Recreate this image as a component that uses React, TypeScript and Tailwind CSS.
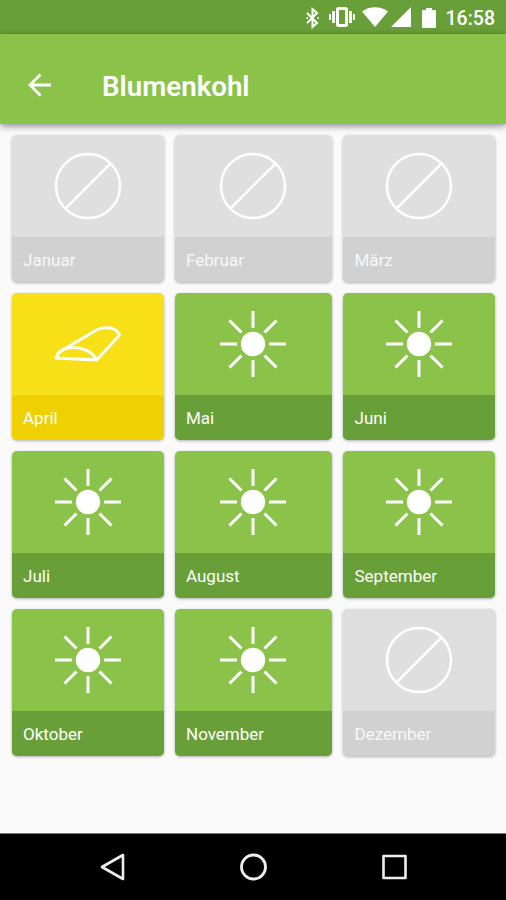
import React from 'react';

type Status = 'none' | 'indoor' | 'harvest';

interface Month {
  name: string;
  status: Status;
}

const months: Month[] = [
  { name: 'Januar', status: 'none' },
  { name: 'Februar', status: 'none' },
  { name: 'März', status: 'none' },
  { name: 'April', status: 'indoor' },
  { name: 'Mai', status: 'harvest' },
  { name: 'Juni', status: 'harvest' },
  { name: 'Juli', status: 'harvest' },
  { name: 'August', status: 'harvest' },
  { name: 'September', status: 'harvest' },
  { name: 'Oktober', status: 'harvest' },
  { name: 'November', status: 'harvest' },
  { name: 'Dezember', status: 'none' },
];

const cardColors: Record<Status, string> = {
  none: 'bg-[#dfdfdf]',
  indoor: 'bg-[#f7e017]',
  harvest: 'bg-[#8bc34a]',
};

const labelColors: Record<Status, string> = {
  none: 'bg-[#d1d1d1] text-[#f8f8f8]',
  indoor: 'bg-[#efd003] text-white',
  harvest: 'bg-[#689f38] text-white',
};

const NoneIcon = () => (
  <svg width="68" height="68" viewBox="-34 -34 68 68" fill="none" stroke="white" strokeWidth="2.5">
    <circle r="32" />
    <path d="M-22 22L22 -22" />
  </svg>
);

const TunnelIcon = () => (
  <svg width="68" height="68" viewBox="-34 -34 68 68" fill="none" stroke="white" strokeWidth="2.8" strokeLinejoin="round">
    <path d="M8.7 16L-32 14C-30 8 -26 5 -20 4C-7 2 4 7 8.7 16Z" />
    <path d="M-31 10.5C-30 8.5 -26 6.5 -22 4L6 -12.5C16 -18.5 27 -17.5 31.5 -9.5C31 -8 29 -6 27 -4L8.7 16" />
  </svg>
);

const SunIcon = () => (
  <svg width="68" height="68" viewBox="-34 -34 68 68" fill="none" stroke="white" strokeWidth="3">
    <circle r="12.2" fill="white" stroke="none" />
    <path d="M0 -33V-16M0 16V33M-33 0H-16M16 0H33" />
    <path d="M-23.5 -23.5L-11.5 -11.5M11.5 11.5L23.5 23.5M23.5 -23.5L11.5 -11.5M-11.5 11.5L-23.5 23.5" />
  </svg>
);

const icons: Record<Status, React.FC> = {
  none: NoneIcon,
  indoor: TunnelIcon,
  harvest: SunIcon,
};

const StatusBar = () => (
  <div className="h-[34px] bg-[#689f38] flex items-center justify-end pr-[11px] text-white">
    <svg className="mr-[9px] mt-px" width="15" height="22" viewBox="0 0 15 22" fill="none" stroke="white" strokeWidth="2">
      <path d="M2 6L12 16L7.5 20V2L12 6L2 16" />
      <path d="M1.5 11H3M12.5 11H14" />
    </svg>
    <svg className="mr-[7px]" width="26" height="20" viewBox="0 0 26 20" fill="none" stroke="white" strokeWidth="2">
      <rect x="8.5" y="1.5" width="9" height="17" rx="1" strokeWidth="3" />
      <path d="M4.5 4V16M21.5 4V16" strokeWidth="2.8" />
      <path d="M1 7V13M25 7V13" />
    </svg>
    <svg className="mr-[3px]" width="26" height="20" viewBox="0 0 26 20" fill="white">
      <path d="M0 4.5C7 -1.3 19 -1.3 26 4.5L13 20Z" />
    </svg>
    <svg className="mr-[11px]" width="20" height="20" viewBox="0 0 20 20" fill="white">
      <path d="M20 0V20H0Z" />
    </svg>
    <svg className="mr-[10px] mt-px" width="14" height="20" viewBox="0 0 14 20" fill="white">
      <path d="M4 0H10V2H13A1 1 0 0 1 14 3V19A1 1 0 0 1 13 20H1A1 1 0 0 1 0 19V3A1 1 0 0 1 1 2H4Z" />
    </svg>
    <span className="text-[19.5px] leading-none font-medium mt-[3px]">16:58</span>
  </div>
);

const MonthCard: React.FC<{ month: Month }> = ({ month }) => {
  const Icon = icons[month.status];

  return (
    <div className={`rounded-[5px] overflow-hidden flex flex-col shadow-[0_1px_3px_rgba(0,0,0,0.3)] ${cardColors[month.status]}`}>
      <div className="h-[101.5px] shrink-0 flex items-center justify-center pb-px">
        <Icon />
      </div>
      <div className={`flex-1 flex items-center px-[11.5px] pt-[2px] text-[17px] leading-none ${labelColors[month.status]}`}>
        {month.name}
      </div>
    </div>
  );
};

const App: React.FC = () => {
  return (
    <div className="w-[506px] h-[900px] flex flex-col overflow-hidden bg-[#fafafa] font-[Roboto,sans-serif]">
      <StatusBar />

      <header className="h-[90px] shrink-0 bg-[#8bc34a] flex items-center pl-[28px] pt-[12px] text-white relative shadow-[0_2px_7px_rgba(0,0,0,0.45)]">
        <svg width="24" height="24" viewBox="0 0 24 24" fill="none" stroke="white" strokeWidth="2.8">
          <path d="M23 12H3M12.5 1.5L2 12L12.5 22.5" />
        </svg>
        <h1 className="ml-[50px] mt-[4px] text-[27.7px] leading-none font-semibold">Blumenkohl</h1>
      </header>

      <main className="flex-1 pt-[11.4px] pl-[11.5px]">
        <div className="grid grid-cols-[152px_157.5px_152px] auto-rows-[147px] gap-x-[11px] gap-y-[11px]">
          {months.map((month) => (
            <MonthCard key={month.name} month={month} />
          ))}
        </div>
      </main>

      <nav className="h-[67px] shrink-0 bg-black border-t border-[#777] flex items-center justify-center gap-[114px]">
        <svg width="27" height="28" viewBox="0 0 27 28" fill="none" stroke="#eee" strokeWidth="2.6" strokeLinejoin="round">
          <path d="M24 2V26L3 14Z" />
        </svg>
        <svg width="27" height="28" viewBox="0 0 27 28" fill="none" stroke="#eee" strokeWidth="2.8">
          <circle cx="13.5" cy="14" r="12" />
        </svg>
        <svg width="27" height="28" viewBox="0 0 27 28" fill="none" stroke="#eee" strokeWidth="2.6" strokeLinejoin="round">
          <rect x="2.5" y="3" width="22" height="22" />
        </svg>
      </nav>
    </div>
  );
};

export default App;
